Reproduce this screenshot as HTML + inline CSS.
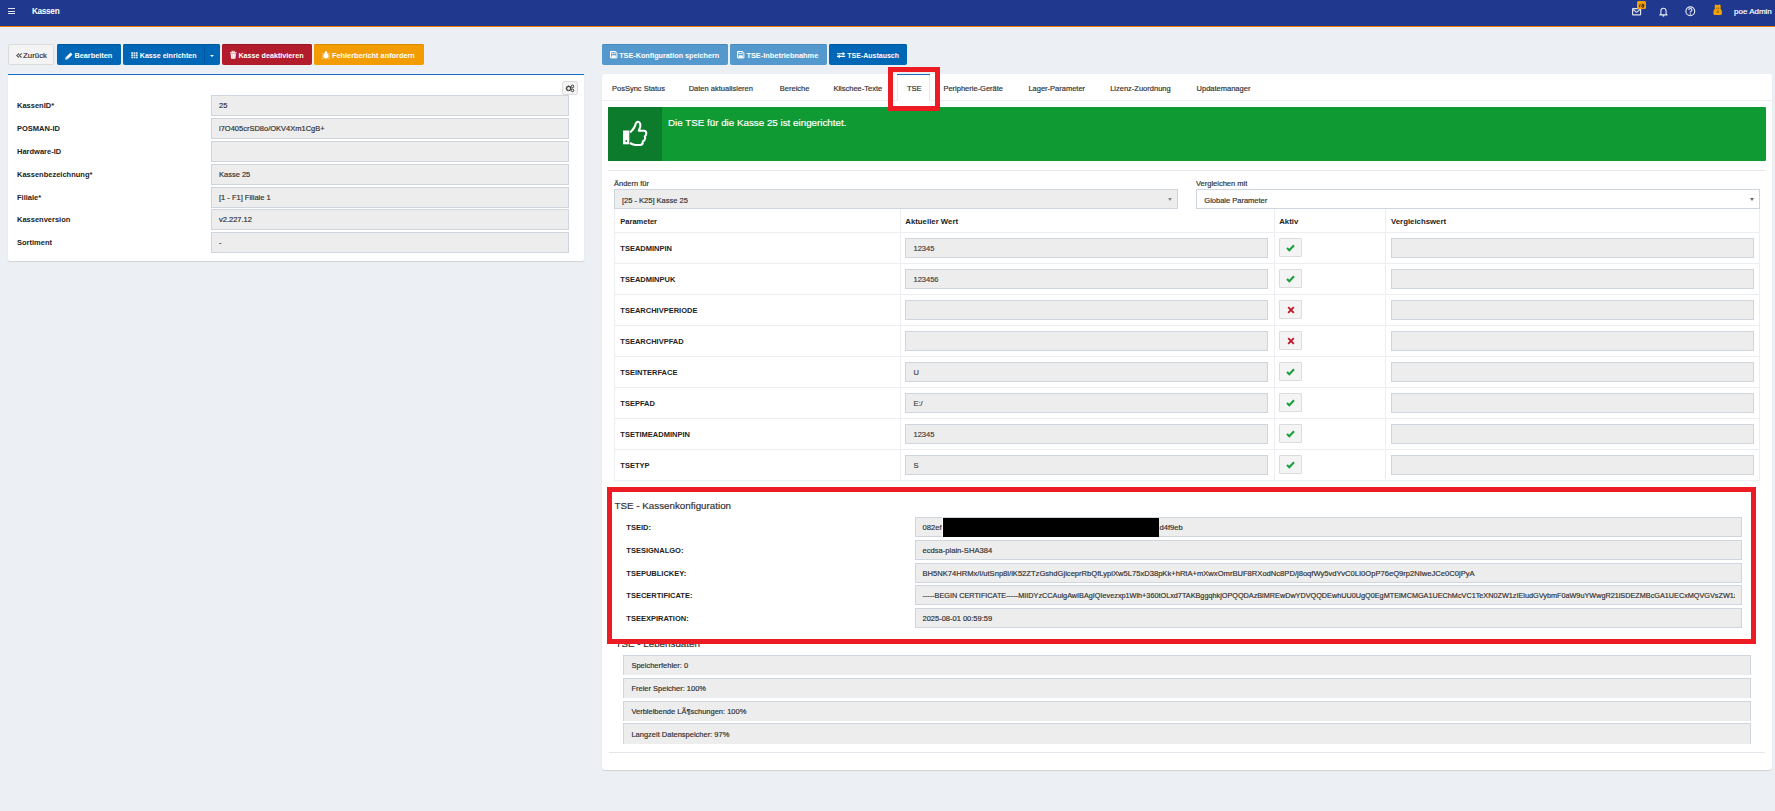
<!DOCTYPE html>
<html><head><meta charset="utf-8"><style>
html,body{margin:0;padding:0;width:1775px;height:811px;overflow:hidden;background:#eceff3;position:relative}
.t{position:absolute;white-space:nowrap;line-height:1;font-family:'Liberation Sans', sans-serif}
</style></head><body>
<div style="position:absolute;left:0px;top:0px;width:1775px;height:26px;background:#20398e"></div>
<div style="position:absolute;left:0px;top:26px;width:1775px;height:1px;background:#f07c0c"></div>
<div style="position:absolute;left:8px;top:8px;width:7px;height:1.1999999999999993px;background:#dfe3ef"></div>
<div style="position:absolute;left:8px;top:10.8px;width:7px;height:1.1999999999999993px;background:#dfe3ef"></div>
<div style="position:absolute;left:8px;top:13px;width:7px;height:1.1999999999999993px;background:#dfe3ef"></div>
<div class="t" style="left:32px;top:8.00px;font-size:8.2px;font-weight:bold;color:#fff;letter-spacing:-0.3px">Kassen</div>
<svg style="position:absolute;left:1632px;top:7.8px;overflow:visible" width="9.2" height="7.5" viewBox="0 0 9.2 7.5"><rect x="0.6" y="0.6" width="8" height="6.3" rx="0.6" fill="none" stroke="#dfe3f0" stroke-width="1.2"/><path d="M1.2 1.5 L4.6 4.4 L8 1.5" fill="none" stroke="#dfe3f0" stroke-width="1.1"/></svg>
<div style="position:absolute;left:1637px;top:1px;width:9px;height:8px;background:#f6a100;border-radius:1.5px"></div>
<svg style="position:absolute;left:1638.5px;top:3.6px;overflow:visible" width="6" height="3.4" viewBox="0 0 6 3.4"><path d="M1.1 0.2 L0.5 3.2 M3.6 0.2 Q5.2 0.2 5 1.3 Q4.8 1.8 4.1 1.8 Q5.1 2 4.8 2.8 Q4.5 3.3 3.3 3.2 Q2.4 3.1 2.7 2.4 Q2.9 1.9 3.5 1.8 Q2.8 1.6 3 0.9 Q3.2 0.2 3.6 0.2" fill="none" stroke="#111" stroke-width="0.9"/></svg>
<svg style="position:absolute;left:1658.5px;top:6.5px;overflow:visible" width="9" height="9.5" viewBox="0 0 9 9.5"><path d="M1.9 7 L1.9 4.2 Q1.9 1.2 4.5 1.2 Q7.1 1.2 7.1 4.2 L7.1 7 L8.1 7.9 L0.9 7.9 Z" fill="none" stroke="#e8ebf5" stroke-width="1.1" stroke-linejoin="round"/><circle cx="4.5" cy="8.8" r="0.9" fill="#e8ebf5"/></svg>
<svg style="position:absolute;left:1684.5px;top:5.5px;overflow:visible" width="11" height="11" viewBox="0 0 11 11"><circle cx="5.3" cy="5.3" r="4.4" fill="none" stroke="#e8ebf5" stroke-width="1.1"/><path d="M3.7 4.1 Q3.7 2.5 5.3 2.5 Q6.9 2.5 6.9 3.9 Q6.9 4.8 5.9 5.3 Q5.3 5.6 5.3 6.4" fill="none" stroke="#e8ebf5" stroke-width="1.2"/><circle cx="5.3" cy="8" r="0.7" fill="#e8ebf5"/></svg>
<svg style="position:absolute;left:1712.8px;top:4px;overflow:visible" width="9.4" height="11.2" viewBox="0 0 9.4 11.2"><path d="M1.8 1.5 L2.6 0.2 L3.6 1.1 Q4.7 0.7 5.8 1.1 L6.8 0.2 L7.6 1.5 Q8 3 7.4 4.4 Q8.6 5.6 9 7.8 Q9.4 10.5 8 11 L1.4 11 Q0 10.5 0.4 7.8 Q0.8 5.6 2 4.4 Q1.4 3 1.8 1.5 Z" fill="#f6a100"/><rect x="3.3" y="3.8" width="1.1" height="0.7" fill="#4a3a20"/><rect x="5" y="3.8" width="1.1" height="0.7" fill="#4a3a20"/><path d="M4.1 6.6 L4.1 9 M5.3 6.6 L5.3 9" stroke="#7a5a20" stroke-width="0.7"/></svg>
<div class="t" style="left:1734px;top:8.00px;font-size:8px;font-weight:normal;color:#fff;-webkit-text-stroke:0.18px #fff;">poe Admin</div>
<div style="position:absolute;left:0px;top:27px;width:1775px;height:784px;background:#eceff3"></div>
<div style="position:absolute;left:8px;top:44px;width:46px;height:21px;background:#f4f4f4;border-radius:2px;box-sizing:border-box;border:1px solid #dcdcdc;"></div>
<div class="t" style="left:23px;top:52.00px;font-size:7.85px;font-weight:normal;color:#333;-webkit-text-stroke:0.18px #333;">Zurück</div>
<svg style="position:absolute;left:15.5px;top:53px;overflow:visible" width="6" height="5" viewBox="0 0 6 5"><path d="M3 0.5 L0.8 2.5 L3 4.5 M5.6 0.5 L3.4 2.5 L5.6 4.5" fill="none" stroke="#555" stroke-width="1.1"/></svg>
<div style="position:absolute;left:57px;top:44px;width:64px;height:21px;background:#0067b7;border-radius:2px;box-shadow:inset 0 1px 0 #00579c;"></div>
<div class="t" style="left:74.4px;top:52.00px;font-size:7.35px;font-weight:bold;color:#fff;">Bearbeiten</div>
<svg style="position:absolute;left:65px;top:51.5px;overflow:visible" width="8" height="8" viewBox="0 0 8 8"><path d="M0.3 7.7 L0.8 5.3 L5.6 0.5 L7.5 2.4 L2.7 7.2 Z" fill="#fff"/><path d="M1.2 5.6 L2.4 6.8" stroke="#0067b7" stroke-width="0.5"/></svg>
<div style="position:absolute;left:123px;top:44px;width:97px;height:21px;background:#0067b7;border-radius:2px;box-shadow:inset 0 1px 0 #00579c;"></div>
<div class="t" style="left:139.8px;top:53.00px;font-size:7.1px;font-weight:bold;color:#fff;">Kasse einrichten</div>
<svg style="position:absolute;left:130.8px;top:51.5px;overflow:visible" width="7" height="7" viewBox="0 0 7 7"><rect x="0.20" y="0.20" width="1.8" height="1.7" fill="#fff" fill-opacity="0.85"/><rect x="2.55" y="0.20" width="1.8" height="1.7" fill="#fff" fill-opacity="0.85"/><rect x="4.90" y="0.20" width="1.8" height="1.7" fill="#fff" fill-opacity="0.85"/><rect x="0.20" y="2.40" width="1.8" height="1.7" fill="#fff" fill-opacity="0.85"/><rect x="2.55" y="2.40" width="1.8" height="1.7" fill="#fff" fill-opacity="0.85"/><rect x="4.90" y="2.40" width="1.8" height="1.7" fill="#fff" fill-opacity="0.85"/><rect x="0.20" y="4.60" width="1.8" height="1.7" fill="#fff" fill-opacity="0.85"/><rect x="2.55" y="4.60" width="1.8" height="1.7" fill="#fff" fill-opacity="0.85"/><rect x="4.90" y="4.60" width="1.8" height="1.7" fill="#fff" fill-opacity="0.85"/></svg>
<div style="position:absolute;left:204px;top:44px;width:1px;height:21px;background:#00599f"></div>
<div style="position:absolute;left:209.5px;top:54.6px;width:0;height:0;border-left:2.5px solid transparent;border-right:2.5px solid transparent;border-top:2.4px solid #fff"></div>
<div style="position:absolute;left:222px;top:44px;width:90px;height:21px;background:#b21c2b;border-radius:2px;box-shadow:inset 0 1px 0 #9a1423;"></div>
<div class="t" style="left:238.4px;top:52.00px;font-size:7.2px;font-weight:bold;color:#fff;">Kasse deaktivieren</div>
<svg style="position:absolute;left:230px;top:51px;overflow:visible" width="6.5" height="8" viewBox="0 0 6.5 8"><rect x="0" y="1.3" width="6.5" height="1" fill="#fff"/><rect x="2" y="0.2" width="2.5" height="1.3" fill="none" stroke="#fff" stroke-width="0.7"/><path d="M0.6 2.6 L5.9 2.6 L5.4 7.8 L1.1 7.8 Z" fill="#fff"/><path d="M2.3 3.5 V7 M4.2 3.5 V7" stroke="#e3a9b0" stroke-width="0.6"/></svg>
<div style="position:absolute;left:314px;top:44px;width:110px;height:21px;background:#f39c00;border-radius:2px;box-shadow:inset 0 1px 0 #d98a00;"></div>
<div class="t" style="left:332px;top:52.00px;font-size:7.35px;font-weight:bold;color:#fff;">Fehlerbericht anfordern</div>
<svg style="position:absolute;left:322px;top:51px;overflow:visible" width="8" height="8" viewBox="0 0 8 8"><ellipse cx="4" cy="4.8" rx="2.2" ry="3" fill="#fff"/><circle cx="4" cy="1.6" r="1.3" fill="#fff"/><path d="M0.3 2.2 L1.8 3.4 M7.7 2.2 L6.2 3.4 M0 5 H1.8 M8 5 H6.2 M0.3 7.8 L1.8 6.6 M7.7 7.8 L6.2 6.6" stroke="#fff" stroke-width="0.9"/></svg>
<div style="position:absolute;left:8px;top:74px;width:576px;height:187px;background:#fff;border-radius:2px;box-shadow:0 1px 1px rgba(0,0,0,0.12)"></div>
<div style="position:absolute;left:8px;top:74px;width:576px;height:1px;background:#1a6fc0"></div>
<div style="position:absolute;left:562px;top:81px;width:16px;height:14px;background:#f4f4f4;box-sizing:border-box;border:1px solid #dcdcdc;border-radius:2px"></div>
<svg style="position:absolute;left:565px;top:84px;overflow:visible" width="10" height="9" viewBox="0 0 10 9"><circle cx="3.6" cy="4.4" r="2" fill="none" stroke="#333" stroke-width="1.4" stroke-dasharray="1 0.6"/><circle cx="3.6" cy="4.4" r="2.3" fill="none" stroke="#333" stroke-width="0.8"/><circle cx="7.5" cy="2.4" r="1.3" fill="none" stroke="#333" stroke-width="1"/><circle cx="7.5" cy="6.4" r="1.3" fill="none" stroke="#333" stroke-width="1"/></svg>
<div class="t" style="left:17px;top:102.00px;font-size:7.5px;font-weight:bold;color:#222;">KassenID*</div>
<div style="position:absolute;left:211px;top:95px;width:358px;height:20.599999999999994px;background:#ededed;box-sizing:border-box;border:1px solid #cfd5dd"></div>
<div class="t" style="left:219px;top:102.00px;font-size:7.5px;font-weight:normal;color:#333;-webkit-text-stroke:0.18px #333;">25</div>
<div class="t" style="left:17px;top:125.00px;font-size:7.5px;font-weight:bold;color:#222;">POSMAN-ID</div>
<div style="position:absolute;left:211px;top:118px;width:358px;height:20.599999999999994px;background:#ededed;box-sizing:border-box;border:1px solid #cfd5dd"></div>
<div class="t" style="left:219px;top:125.00px;font-size:7.5px;font-weight:normal;color:#333;-webkit-text-stroke:0.18px #333;">i7O405crSD8o/OKV4Xm1CgB+</div>
<div class="t" style="left:17px;top:148.00px;font-size:7.5px;font-weight:bold;color:#222;">Hardware-ID</div>
<div style="position:absolute;left:211px;top:141px;width:358px;height:20.599999999999994px;background:#ededed;box-sizing:border-box;border:1px solid #cfd5dd"></div>
<div class="t" style="left:17px;top:171.00px;font-size:7.5px;font-weight:bold;color:#222;">Kassenbezeichnung*</div>
<div style="position:absolute;left:211px;top:164px;width:358px;height:20.599999999999994px;background:#ededed;box-sizing:border-box;border:1px solid #cfd5dd"></div>
<div class="t" style="left:219px;top:171.00px;font-size:7.5px;font-weight:normal;color:#333;-webkit-text-stroke:0.18px #333;">Kasse 25</div>
<div class="t" style="left:17px;top:194.00px;font-size:7.5px;font-weight:bold;color:#222;">Filiale*</div>
<div style="position:absolute;left:211px;top:187px;width:358px;height:20.599999999999994px;background:#ededed;box-sizing:border-box;border:1px solid #cfd5dd"></div>
<div class="t" style="left:219px;top:194.00px;font-size:7.5px;font-weight:normal;color:#333;-webkit-text-stroke:0.18px #333;">[1 - F1] Filiale 1</div>
<div class="t" style="left:17px;top:216.00px;font-size:7.5px;font-weight:bold;color:#222;">Kassenversion</div>
<div style="position:absolute;left:211px;top:209.2px;width:358px;height:20.600000000000023px;background:#ededed;box-sizing:border-box;border:1px solid #cfd5dd"></div>
<div class="t" style="left:219px;top:216.00px;font-size:7.5px;font-weight:normal;color:#333;-webkit-text-stroke:0.18px #333;">v2.227.12</div>
<div class="t" style="left:17px;top:239.00px;font-size:7.5px;font-weight:bold;color:#222;">Sortiment</div>
<div style="position:absolute;left:211px;top:232.2px;width:358px;height:20.600000000000023px;background:#ededed;box-sizing:border-box;border:1px solid #cfd5dd"></div>
<div class="t" style="left:219px;top:239.00px;font-size:7.5px;font-weight:normal;color:#333;-webkit-text-stroke:0.18px #333;">-</div>
<div style="position:absolute;left:602px;top:44px;width:126px;height:21px;background:#5499cd;border-radius:2px;box-shadow:inset 0 1px 0 #4a88b8;"></div>
<div class="t" style="left:619.2px;top:52.00px;font-size:7.24px;font-weight:bold;color:#fff;">TSE-Konfiguration speichern</div>
<svg style="position:absolute;left:610px;top:51.4px;overflow:visible" width="7.4" height="7.4" viewBox="0 0 7.4 7.4"><path d="M0.5 0.5 H5.6 L6.9 1.8 V6.9 H0.5 Z" fill="none" stroke="#fff" stroke-width="1"/><rect x="1.9" y="0.5" width="3.2" height="2.2" fill="none" stroke="#fff" stroke-width="0.8"/><rect x="1.6" y="4.3" width="4.2" height="2.6" fill="#fff"/></svg>
<div style="position:absolute;left:729.5px;top:44px;width:97.5px;height:21px;background:#5499cd;border-radius:2px;box-shadow:inset 0 1px 0 #4a88b8;"></div>
<div class="t" style="left:746.4px;top:52.00px;font-size:7.4px;font-weight:bold;color:#fff;">TSE-Inbetriebnahme</div>
<svg style="position:absolute;left:737.2px;top:51.4px;overflow:visible" width="7.4" height="7.4" viewBox="0 0 7.4 7.4"><path d="M0.5 0.5 H5.6 L6.9 1.8 V6.9 H0.5 Z" fill="none" stroke="#fff" stroke-width="1"/><rect x="1.9" y="0.5" width="3.2" height="2.2" fill="none" stroke="#fff" stroke-width="0.8"/><rect x="1.6" y="4.3" width="4.2" height="2.6" fill="#fff"/></svg>
<div style="position:absolute;left:829px;top:44px;width:78px;height:21px;background:#0067b7;border-radius:2px;box-shadow:inset 0 1px 0 #00579c;"></div>
<div class="t" style="left:847.3px;top:52.00px;font-size:7.0px;font-weight:bold;color:#fff;">TSE-Austausch</div>
<svg style="position:absolute;left:836.6px;top:52.2px;overflow:visible" width="8.4" height="6.2" viewBox="0 0 8.4 6.2"><path d="M0 1.8 H6.2 M0 4.4 H8.2" stroke="#fff" stroke-width="1.1"/><path d="M5.6 0 L8.4 1.8 L5.6 3.6 Z" fill="#fff"/><path d="M2.8 2.6 L0 4.4 L2.8 6.2 Z" fill="#fff"/></svg>
<div style="position:absolute;left:602px;top:74px;width:1170px;height:696px;background:#fff;border-radius:3px;box-shadow:0 1px 1px rgba(0,0,0,0.12)"></div>
<div style="position:absolute;left:602px;top:100px;width:1170px;height:1px;background:#edeff2"></div>
<div style="position:absolute;left:897px;top:74px;width:33px;height:27px;background:#fff;box-sizing:border-box;border-left:1px solid #e6e8eb;border-right:1px solid #e6e8eb"></div>
<div style="position:absolute;left:897px;top:74px;width:33px;height:1.2000000000000028px;background:#1a6fc0"></div>
<div class="t" style="left:612px;top:85.00px;font-size:7.5px;font-weight:normal;color:#333;-webkit-text-stroke:0.18px #333;">PosSync Status</div>
<div class="t" style="left:688.7px;top:85.00px;font-size:7.5px;font-weight:normal;color:#333;-webkit-text-stroke:0.18px #333;">Daten aktualisieren</div>
<div class="t" style="left:779.8px;top:85.00px;font-size:7.5px;font-weight:normal;color:#333;-webkit-text-stroke:0.18px #333;">Bereiche</div>
<div class="t" style="left:833.4px;top:85.00px;font-size:7.5px;font-weight:normal;color:#333;-webkit-text-stroke:0.18px #333;">Klischee-Texte</div>
<div class="t" style="left:906.9px;top:85.00px;font-size:7.5px;font-weight:normal;color:#333;-webkit-text-stroke:0.18px #333;">TSE</div>
<div class="t" style="left:943.4px;top:85.00px;font-size:7.5px;font-weight:normal;color:#333;-webkit-text-stroke:0.18px #333;">Peripherie-Geräte</div>
<div class="t" style="left:1028.4px;top:85.00px;font-size:7.5px;font-weight:normal;color:#333;-webkit-text-stroke:0.18px #333;">Lager-Parameter</div>
<div class="t" style="left:1110.2px;top:85.00px;font-size:7.5px;font-weight:normal;color:#333;-webkit-text-stroke:0.18px #333;">Lizenz-Zuordnung</div>
<div class="t" style="left:1196.6px;top:85.00px;font-size:7.5px;font-weight:normal;color:#333;-webkit-text-stroke:0.18px #333;">Updatemanager</div>
<div style="position:absolute;left:608px;top:107px;width:1158px;height:54px;background:#0f9a33;border-radius:1px"></div>
<div style="position:absolute;left:608px;top:107px;width:54px;height:54px;background:#0c7b2b"></div>
<svg style="position:absolute;left:622px;top:120px" width="26" height="27" viewBox="0 0 26 27"><rect x="1" y="10.5" width="6.3" height="13.8" fill="#fff"/><circle cx="4.3" cy="21" r="0.9" fill="#0c7b2b"/><path d="M8 12.5 Q11.5 9.5 13 6 Q14 1.8 16 1.8 Q19 2.3 18.2 7 L16.8 10.8 L22.2 10.8 Q24.6 11.3 24.2 13.8 Q23.9 15.8 22.8 16.4 Q23.8 18.2 22.6 19.9 Q21.8 21.2 20.8 21.4 Q21.3 24 18.8 25 L13.2 25 Q10.4 24.5 8 23" fill="none" stroke="#fff" stroke-width="2.1" stroke-linejoin="round"/></svg>
<div class="t" style="left:668px;top:118.00px;font-size:9.8px;font-weight:normal;color:#fff;-webkit-text-stroke:0.18px #fff;">Die TSE für die Kasse 25 ist eingerichtet.</div>
<div style="position:absolute;left:888px;top:67px;width:52px;height:44px;box-sizing:border-box;border:5px solid #ed1c24"></div>
<div style="position:absolute;left:608px;top:170px;width:1157px;height:1px;background:#e3e6ea"></div>
<div class="t" style="left:614px;top:180.00px;font-size:7.5px;font-weight:normal;color:#333;-webkit-text-stroke:0.18px #333;">Ändern für</div>
<div style="position:absolute;left:614px;top:189px;width:564px;height:19.5px;background:#ededed;box-sizing:border-box;border:1px solid #cfd5dd"></div>
<div class="t" style="left:622px;top:197.00px;font-size:7.5px;font-weight:normal;color:#333;-webkit-text-stroke:0.18px #333;">[25 - K25] Kasse 25</div>
<div style="position:absolute;left:1168px;top:198px;border-left:2.5px solid transparent;border-right:2.5px solid transparent;border-top:3px solid #888"></div>
<div class="t" style="left:1196px;top:180.00px;font-size:7.5px;font-weight:normal;color:#333;-webkit-text-stroke:0.18px #333;">Vergleichen mit</div>
<div style="position:absolute;left:1196px;top:189px;width:563.5px;height:19.5px;background:#fff;box-sizing:border-box;border:1px solid #cfd5dd"></div>
<div class="t" style="left:1204.3px;top:197.00px;font-size:7.5px;font-weight:normal;color:#333;-webkit-text-stroke:0.18px #333;">Globale Parameter</div>
<div style="position:absolute;left:1749.5px;top:198px;border-left:2.5px solid transparent;border-right:2.5px solid transparent;border-top:3px solid #666"></div>
<div style="position:absolute;left:614px;top:208.5px;width:1145.5px;height:272.5px;box-sizing:border-box;border:1px solid #eceef1;border-top:none"></div>
<div style="position:absolute;left:900px;top:208.5px;width:1px;height:272.5px;background:#eceef1"></div>
<div style="position:absolute;left:1273.7px;top:208.5px;width:1.0px;height:272.5px;background:#eceef1"></div>
<div style="position:absolute;left:1385px;top:208.5px;width:1px;height:272.5px;background:#eceef1"></div>
<div class="t" style="left:620.3px;top:218.00px;font-size:7.5px;font-weight:bold;color:#222;">Parameter</div>
<div class="t" style="left:905.3px;top:218.00px;font-size:7.8px;font-weight:bold;color:#222;">Aktueller Wert</div>
<div class="t" style="left:1279.2px;top:218.00px;font-size:7.8px;font-weight:bold;color:#222;">Aktiv</div>
<div class="t" style="left:1391px;top:218.00px;font-size:7.8px;font-weight:bold;color:#222;">Vergleichswert</div>
<div style="position:absolute;left:614px;top:232px;width:1145.5px;height:1px;background:#eceef1"></div>
<div class="t" style="left:620.3px;top:245.00px;font-size:7.5px;font-weight:bold;color:#222;letter-spacing:0px">TSEADMINPIN</div>
<div style="position:absolute;left:905.3px;top:238px;width:362.70000000000005px;height:19.5px;background:#ededed;box-sizing:border-box;border:1px solid #cfd5dd"></div>
<div class="t" style="left:913.5px;top:245.00px;font-size:7.5px;font-weight:normal;color:#444;-webkit-text-stroke:0.18px #444;">12345</div>
<div style="position:absolute;left:1279.2px;top:238px;width:22.799999999999955px;height:19px;background:#f4f4f4;box-sizing:border-box;border:1px solid #dcdcdc;border-radius:1px"></div>
<svg style="position:absolute;left:1286px;top:244px" width="9" height="8" viewBox="0 0 9 8"><path d="M1 4 L3.3 6.3 L8 1.3" fill="none" stroke="#16a03a" stroke-width="2"/></svg>
<div style="position:absolute;left:1391px;top:238px;width:362.5px;height:19.5px;background:#ededed;box-sizing:border-box;border:1px solid #cfd5dd"></div>
<div style="position:absolute;left:614px;top:263px;width:1145.5px;height:1px;background:#eceef1"></div>
<div class="t" style="left:620.3px;top:276.00px;font-size:7.5px;font-weight:bold;color:#222;letter-spacing:0px">TSEADMINPUK</div>
<div style="position:absolute;left:905.3px;top:269px;width:362.70000000000005px;height:19.5px;background:#ededed;box-sizing:border-box;border:1px solid #cfd5dd"></div>
<div class="t" style="left:913.5px;top:276.00px;font-size:7.5px;font-weight:normal;color:#444;-webkit-text-stroke:0.18px #444;">123456</div>
<div style="position:absolute;left:1279.2px;top:269px;width:22.799999999999955px;height:19px;background:#f4f4f4;box-sizing:border-box;border:1px solid #dcdcdc;border-radius:1px"></div>
<svg style="position:absolute;left:1286px;top:275px" width="9" height="8" viewBox="0 0 9 8"><path d="M1 4 L3.3 6.3 L8 1.3" fill="none" stroke="#16a03a" stroke-width="2"/></svg>
<div style="position:absolute;left:1391px;top:269px;width:362.5px;height:19.5px;background:#ededed;box-sizing:border-box;border:1px solid #cfd5dd"></div>
<div style="position:absolute;left:614px;top:294px;width:1145.5px;height:1px;background:#eceef1"></div>
<div class="t" style="left:620.3px;top:307.00px;font-size:7.5px;font-weight:bold;color:#222;letter-spacing:0px">TSEARCHIVPERIODE</div>
<div style="position:absolute;left:905.3px;top:300px;width:362.70000000000005px;height:19.5px;background:#ededed;box-sizing:border-box;border:1px solid #cfd5dd"></div>
<div style="position:absolute;left:1279.2px;top:300px;width:22.799999999999955px;height:19px;background:#f4f4f4;box-sizing:border-box;border:1px solid #dcdcdc;border-radius:1px"></div>
<svg style="position:absolute;left:1287px;top:306px" width="8" height="8" viewBox="0 0 8 8"><path d="M1.2 1.2 L6.8 6.8 M6.8 1.2 L1.2 6.8" fill="none" stroke="#c0182a" stroke-width="1.9"/></svg>
<div style="position:absolute;left:1391px;top:300px;width:362.5px;height:19.5px;background:#ededed;box-sizing:border-box;border:1px solid #cfd5dd"></div>
<div style="position:absolute;left:614px;top:325px;width:1145.5px;height:1px;background:#eceef1"></div>
<div class="t" style="left:620.3px;top:338.00px;font-size:7.5px;font-weight:bold;color:#222;letter-spacing:0px">TSEARCHIVPFAD</div>
<div style="position:absolute;left:905.3px;top:331px;width:362.70000000000005px;height:19.5px;background:#ededed;box-sizing:border-box;border:1px solid #cfd5dd"></div>
<div style="position:absolute;left:1279.2px;top:331px;width:22.799999999999955px;height:19px;background:#f4f4f4;box-sizing:border-box;border:1px solid #dcdcdc;border-radius:1px"></div>
<svg style="position:absolute;left:1287px;top:337px" width="8" height="8" viewBox="0 0 8 8"><path d="M1.2 1.2 L6.8 6.8 M6.8 1.2 L1.2 6.8" fill="none" stroke="#c0182a" stroke-width="1.9"/></svg>
<div style="position:absolute;left:1391px;top:331px;width:362.5px;height:19.5px;background:#ededed;box-sizing:border-box;border:1px solid #cfd5dd"></div>
<div style="position:absolute;left:614px;top:356px;width:1145.5px;height:1px;background:#eceef1"></div>
<div class="t" style="left:620.3px;top:369.00px;font-size:7.5px;font-weight:bold;color:#222;letter-spacing:0px">TSEINTERFACE</div>
<div style="position:absolute;left:905.3px;top:362px;width:362.70000000000005px;height:19.5px;background:#ededed;box-sizing:border-box;border:1px solid #cfd5dd"></div>
<div class="t" style="left:913.5px;top:369.00px;font-size:7.5px;font-weight:normal;color:#444;-webkit-text-stroke:0.18px #444;">U</div>
<div style="position:absolute;left:1279.2px;top:362px;width:22.799999999999955px;height:19px;background:#f4f4f4;box-sizing:border-box;border:1px solid #dcdcdc;border-radius:1px"></div>
<svg style="position:absolute;left:1286px;top:368px" width="9" height="8" viewBox="0 0 9 8"><path d="M1 4 L3.3 6.3 L8 1.3" fill="none" stroke="#16a03a" stroke-width="2"/></svg>
<div style="position:absolute;left:1391px;top:362px;width:362.5px;height:19.5px;background:#ededed;box-sizing:border-box;border:1px solid #cfd5dd"></div>
<div style="position:absolute;left:614px;top:387px;width:1145.5px;height:1px;background:#eceef1"></div>
<div class="t" style="left:620.3px;top:400.00px;font-size:7.5px;font-weight:bold;color:#222;letter-spacing:0px">TSEPFAD</div>
<div style="position:absolute;left:905.3px;top:393px;width:362.70000000000005px;height:19.5px;background:#ededed;box-sizing:border-box;border:1px solid #cfd5dd"></div>
<div class="t" style="left:913.5px;top:400.00px;font-size:7.5px;font-weight:normal;color:#444;-webkit-text-stroke:0.18px #444;">E:/</div>
<div style="position:absolute;left:1279.2px;top:393px;width:22.799999999999955px;height:19px;background:#f4f4f4;box-sizing:border-box;border:1px solid #dcdcdc;border-radius:1px"></div>
<svg style="position:absolute;left:1286px;top:399px" width="9" height="8" viewBox="0 0 9 8"><path d="M1 4 L3.3 6.3 L8 1.3" fill="none" stroke="#16a03a" stroke-width="2"/></svg>
<div style="position:absolute;left:1391px;top:393px;width:362.5px;height:19.5px;background:#ededed;box-sizing:border-box;border:1px solid #cfd5dd"></div>
<div style="position:absolute;left:614px;top:418px;width:1145.5px;height:1px;background:#eceef1"></div>
<div class="t" style="left:620.3px;top:431.00px;font-size:7.5px;font-weight:bold;color:#222;letter-spacing:0px">TSETIMEADMINPIN</div>
<div style="position:absolute;left:905.3px;top:424px;width:362.70000000000005px;height:19.5px;background:#ededed;box-sizing:border-box;border:1px solid #cfd5dd"></div>
<div class="t" style="left:913.5px;top:431.00px;font-size:7.5px;font-weight:normal;color:#444;-webkit-text-stroke:0.18px #444;">12345</div>
<div style="position:absolute;left:1279.2px;top:424px;width:22.799999999999955px;height:19px;background:#f4f4f4;box-sizing:border-box;border:1px solid #dcdcdc;border-radius:1px"></div>
<svg style="position:absolute;left:1286px;top:430px" width="9" height="8" viewBox="0 0 9 8"><path d="M1 4 L3.3 6.3 L8 1.3" fill="none" stroke="#16a03a" stroke-width="2"/></svg>
<div style="position:absolute;left:1391px;top:424px;width:362.5px;height:19.5px;background:#ededed;box-sizing:border-box;border:1px solid #cfd5dd"></div>
<div style="position:absolute;left:614px;top:449px;width:1145.5px;height:1px;background:#eceef1"></div>
<div class="t" style="left:620.3px;top:462.00px;font-size:7.5px;font-weight:bold;color:#222;letter-spacing:0px">TSETYP</div>
<div style="position:absolute;left:905.3px;top:455px;width:362.70000000000005px;height:19.5px;background:#ededed;box-sizing:border-box;border:1px solid #cfd5dd"></div>
<div class="t" style="left:913.5px;top:462.00px;font-size:7.5px;font-weight:normal;color:#444;-webkit-text-stroke:0.18px #444;">S</div>
<div style="position:absolute;left:1279.2px;top:455px;width:22.799999999999955px;height:19px;background:#f4f4f4;box-sizing:border-box;border:1px solid #dcdcdc;border-radius:1px"></div>
<svg style="position:absolute;left:1286px;top:461px" width="9" height="8" viewBox="0 0 9 8"><path d="M1 4 L3.3 6.3 L8 1.3" fill="none" stroke="#16a03a" stroke-width="2"/></svg>
<div style="position:absolute;left:1391px;top:455px;width:362.5px;height:19.5px;background:#ededed;box-sizing:border-box;border:1px solid #cfd5dd"></div>
<div class="t" style="left:614.5px;top:501.00px;font-size:9.8px;font-weight:normal;color:#333;-webkit-text-stroke:0.18px #333;">TSE - Kassenkonfiguration</div>
<div class="t" style="left:626.3px;top:524.00px;font-size:7.5px;font-weight:bold;color:#222;">TSEID:</div>
<div style="position:absolute;left:914.5px;top:517px;width:827.0px;height:20px;background:#ededed;box-sizing:border-box;border:1px solid #cfd5dd"></div>
<div style="position:absolute;left:915.5px;top:518px;width:819px;height:18px;overflow:hidden">
<div class="t" style="left:7px;top:6.00px;font-size:7.6px;font-weight:normal;color:#333;-webkit-text-stroke:0.18px #333;">082ef</div>
</div>
<div class="t" style="left:626.3px;top:547.00px;font-size:7.5px;font-weight:bold;color:#222;">TSESIGNALGO:</div>
<div style="position:absolute;left:914.5px;top:540px;width:827.0px;height:20px;background:#ededed;box-sizing:border-box;border:1px solid #cfd5dd"></div>
<div style="position:absolute;left:915.5px;top:541px;width:819px;height:18px;overflow:hidden">
<div class="t" style="left:7px;top:6.00px;font-size:7.6px;font-weight:normal;color:#333;-webkit-text-stroke:0.18px #333;">ecdsa-plain-SHA384</div>
</div>
<div class="t" style="left:626.3px;top:570.00px;font-size:7.5px;font-weight:bold;color:#222;">TSEPUBLICKEY:</div>
<div style="position:absolute;left:914.5px;top:563px;width:827.0px;height:20px;background:#ededed;box-sizing:border-box;border:1px solid #cfd5dd"></div>
<div style="position:absolute;left:915.5px;top:564px;width:819px;height:18px;overflow:hidden">
<div class="t" style="left:7px;top:6.00px;font-size:7.6px;font-weight:normal;color:#333;-webkit-text-stroke:0.18px #333;">BH5NK74HRMx/l/utSnp8l/iK52ZTzGshdGjiceprRbQfLypiXw5L75xD38pKk+hRtA+mXwxOmrBUF8RXodNc8PD/j8oqfWy5vdYvC0LI0OpP76eQ9rp2NIweJCe0C0jPyA</div>
</div>
<div class="t" style="left:626.3px;top:592.00px;font-size:7.5px;font-weight:bold;color:#222;">TSECERTIFICATE:</div>
<div style="position:absolute;left:914.5px;top:585px;width:827.0px;height:20px;background:#ededed;box-sizing:border-box;border:1px solid #cfd5dd"></div>
<div style="position:absolute;left:915.5px;top:586px;width:819px;height:18px;overflow:hidden">
<div class="t" style="left:7px;top:6.00px;font-size:7.27px;font-weight:normal;color:#333;-webkit-text-stroke:0.18px #333;">-----BEGIN CERTIFICATE-----MIIDYzCCAuigAwIBAgIQIevezxp1Wlh+360tOLxd7TAKBggqhkjOPQQDAzBiMREwDwYDVQQDEwhUU0UgQ0EgMTElMCMGA1UEChMcVC1TeXN0ZW1zIEludGVybmF0aW9uYWwgR21iSDEZMBcGA1UECxMQVGVsZW1zIEludGVybmF0aW9uYWw</div>
</div>
<div class="t" style="left:626.3px;top:615.00px;font-size:7.5px;font-weight:bold;color:#222;">TSEEXPIRATION:</div>
<div style="position:absolute;left:914.5px;top:608px;width:827.0px;height:20px;background:#ededed;box-sizing:border-box;border:1px solid #cfd5dd"></div>
<div style="position:absolute;left:915.5px;top:609px;width:819px;height:18px;overflow:hidden">
<div class="t" style="left:7px;top:6.00px;font-size:7.5px;font-weight:normal;color:#333;-webkit-text-stroke:0.18px #333;">2025-08-01 00:59:59</div>
</div>
<div style="position:absolute;left:941.8px;top:517.2px;width:1.2000000000000455px;height:19.399999999999977px;background:#fff"></div>
<div style="position:absolute;left:943px;top:517.9px;width:216px;height:18.899999999999977px;background:#000"></div>
<div class="t" style="left:1159.5px;top:524.00px;font-size:7.6px;font-weight:normal;color:#333;-webkit-text-stroke:0.18px #333;">d4f9eb</div>
<div class="t" style="left:615.5px;top:639.00px;font-size:9.8px;font-weight:normal;color:#333;-webkit-text-stroke:0.18px #333;">TSE - Lebensdaten</div>
<div style="position:absolute;left:623.2px;top:655.2px;width:1127.8px;height:19.59999999999991px;background:#ededed;box-sizing:border-box;border:1px solid #cfd5dd;border-bottom:none"></div>
<div class="t" style="left:631.4px;top:662.00px;font-size:7.5px;font-weight:normal;color:#333;-webkit-text-stroke:0.18px #333;">Speicherfehler: 0</div>
<div style="position:absolute;left:623.2px;top:678.1px;width:1127.8px;height:19.5px;background:#ededed;box-sizing:border-box;border:1px solid #cfd5dd;border-bottom:none"></div>
<div class="t" style="left:631.4px;top:685.00px;font-size:7.5px;font-weight:normal;color:#333;-webkit-text-stroke:0.18px #333;">Freier Speicher: 100%</div>
<div style="position:absolute;left:623.2px;top:700.5px;width:1127.8px;height:20.100000000000023px;background:#ededed;box-sizing:border-box;border:1px solid #cfd5dd;border-bottom:none"></div>
<div class="t" style="left:631.4px;top:708.00px;font-size:7.5px;font-weight:normal;color:#333;-webkit-text-stroke:0.18px #333;">Verbleibende LÃ¶schungen: 100%</div>
<div style="position:absolute;left:623.2px;top:723.3px;width:1127.8px;height:20.5px;background:#ededed;box-sizing:border-box;border:1px solid #cfd5dd;border-bottom:none"></div>
<div class="t" style="left:631.4px;top:731.00px;font-size:7.5px;font-weight:normal;color:#333;-webkit-text-stroke:0.18px #333;">Langzeit Datenspeicher: 97%</div>
<div style="position:absolute;left:608.7px;top:752px;width:1156.7px;height:1px;background:#e3e6ea"></div>
<div style="position:absolute;left:607px;top:487px;width:1149px;height:157px;box-sizing:border-box;border:5px solid #ed1c24"></div>
</body></html>
